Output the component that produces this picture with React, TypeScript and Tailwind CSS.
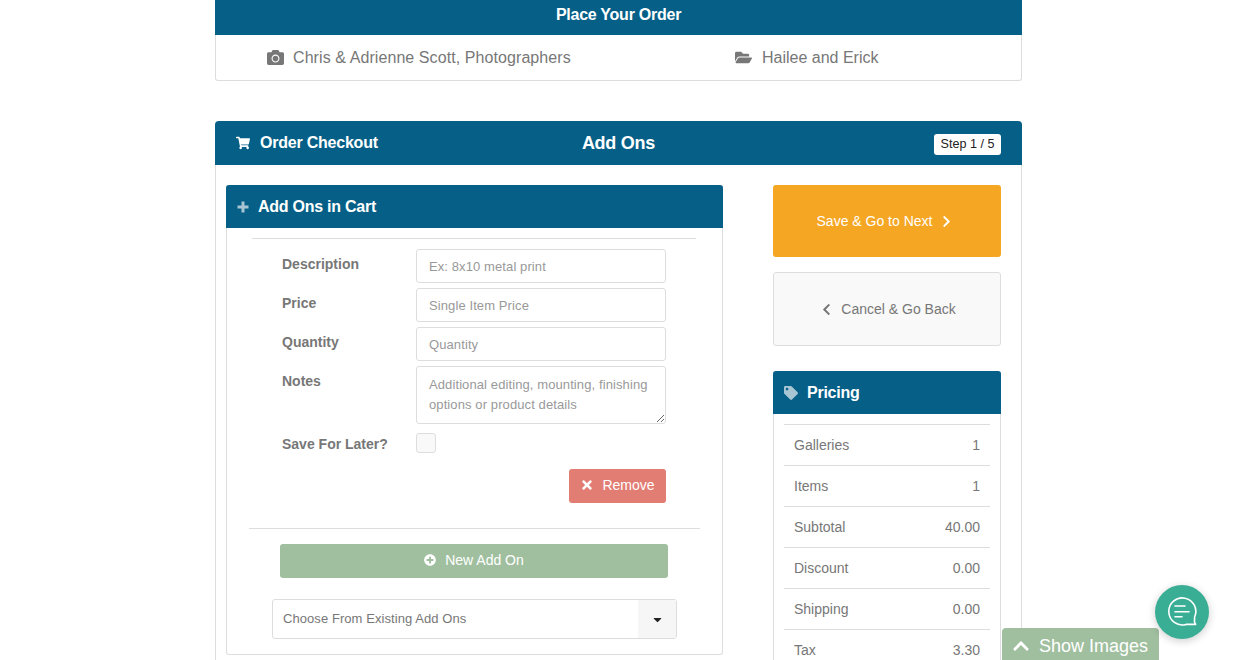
import { FaCamera, FaFolderOpen, FaShoppingCart, FaChevronRight, FaChevronLeft, FaTag, FaTimes, FaPlusCircle, FaChevronUp, FaCaretDown } from "react-icons/fa";

const fieldClass = "block w-[250px] border border-[#ddd] rounded-[3px] bg-white px-[12px] text-[13px] tracking-[0.1px] text-[#777] placeholder:text-[#999] outline-none";

function Label({ children, className = "" }: { children: string; className?: string }) {
  return <div className={"w-[134px] shrink-0 text-[14px] font-bold text-[#777] leading-[20px] " + className}>{children}</div>;
}

function PriceRow({ label, value }: { label: string; value: string }) {
  return (
    <div className="h-[41px] border-t border-[#ddd] flex items-center justify-between pl-[10px] pr-[10px] text-[14px] text-[#777]">
      <span>{label}</span>
      <span>{value}</span>
    </div>
  );
}

export default function App() {
  return (
    <div className="relative h-[660px] overflow-hidden bg-white font-['Liberation_Sans',Arial,sans-serif]">
      <div className="w-[807px] ml-[215px]">
        <div className="h-[35px] pb-[6px] bg-[#055f87] flex items-center justify-center text-white font-bold text-[16px] tracking-[-0.25px]">Place Your Order</div>
        <div className="h-[46px] border border-t-0 border-[#ddd] rounded-b-[3px] flex items-center text-[16px] text-[#777]">
          <div className="w-[468px] pl-[51px] flex items-center tracking-[0.08px]">
            <FaCamera className="text-[17px] mr-[9px]" />
            <span>Chris &amp; Adrienne Scott, Photographers</span>
          </div>
          <div className="flex items-center pl-[51px]">
            <FaFolderOpen className="text-[17px] mr-[10px]" />
            <span>Hailee and Erick</span>
          </div>
        </div>

        <div className="mt-[40px] border border-t-0 border-[#ddd] rounded-t-[4px] h-[600px]">
          <div className="h-[44px] -mx-px bg-[#055f87] rounded-t-[4px] grid grid-cols-[1fr_auto_1fr] items-center pl-[21px] pr-[21px] text-white">
            <div className="flex items-center font-bold text-[16px] tracking-[-0.22px]">
              <FaShoppingCart className="text-[14px] mr-[10px]" />
              <span>Order Checkout</span>
            </div>
            <div className="font-bold text-[18px] tracking-[-0.25px] mt-[1px]">Add Ons</div>
            <div className="justify-self-end mt-[2px] bg-white text-[#222] text-[12.6px] h-[21px] w-[67px] rounded-[3px] flex items-center justify-center">Step 1 / 5</div>
          </div>

          <div className="flex items-start pt-[20px] pl-[10px]">
            <div className="w-[497px] border border-t-0 border-[#ddd] rounded-[3px] h-[470px]">
              <div className="h-[43px] -mx-px bg-[#055f87] rounded-t-[3px] flex items-center pl-[11px] text-white font-bold text-[16px] tracking-[-0.25px]">
                <svg width="12" height="12" viewBox="0 0 12 12" className="mr-[9px] text-[#a8c5d4]" fill="currentColor">
                  <path d="M4.5 0.5h3v4h4v3h-4v4h-3v-4h-4v-3h4z" />
                </svg>
                <span>Add Ons in Cart</span>
              </div>
              <div className="ml-[25px] mr-[26px] mt-[10px] border-t border-[#ddd]"></div>
              <div className="ml-[55px] mt-[10px] flex flex-col gap-[5px]">
                <div className="flex items-start">
                  <Label className="pt-[5px]">Description</Label>
                  <input className={fieldClass + " h-[34px]"} placeholder="Ex: 8x10 metal print" />
                </div>
                <div className="flex items-start">
                  <Label className="pt-[5px]">Price</Label>
                  <input className={fieldClass + " h-[34px]"} placeholder="Single Item Price" />
                </div>
                <div className="flex items-start">
                  <Label className="pt-[5px]">Quantity</Label>
                  <input className={fieldClass + " h-[34px]"} placeholder="Quantity" />
                </div>
                <div className="flex items-start">
                  <Label className="pt-[5px]">Notes</Label>
                  <textarea className={fieldClass + " h-[58px] pt-[8px] leading-[20px] resize-y"} placeholder="Additional editing, mounting, finishing options or product details" />
                </div>
              </div>
              <div className="ml-[55px] mt-[9px] h-[20px] flex items-start">
                <Label className="pt-[1px]">Save For Later?</Label>
                <div className="w-[20px] h-[20px] border border-[#ddd] rounded-[3px] bg-[#f9f9f9]"></div>
              </div>
              <div className="mt-[16px] ml-[342px] w-[97px] h-[34px] pb-[2px] rounded-[3px] bg-[#e27d73] text-white text-[14px] flex items-center justify-center">
                <FaTimes className="text-[14px] mr-[8px]" />
                <span>Remove</span>
              </div>
              <div className="ml-[22px] mr-[22px] mt-[25px] border-t border-[#ddd]"></div>
              <div className="mt-[15px] ml-[53px] w-[388px] h-[34px] pb-[2px] rounded-[3px] bg-[#a0bf9f] text-white text-[14px] flex items-center justify-center">
                <FaPlusCircle className="text-[12px] mr-[9px]" />
                <span>New Add On</span>
              </div>
              <div className="mt-[21px] ml-[45px] w-[405px] h-[40px] border border-[#ddd] rounded-[3px] flex items-stretch text-[13px] tracking-[0.07px] text-[#777]">
                <div className="flex-1 flex items-center pl-[10px]">Choose From Existing Add Ons</div>
                <div className="w-[38px] bg-[#f6f6f6] flex items-center justify-center text-[#222]">
                  <FaCaretDown className="text-[13px]" />
                </div>
              </div>
            </div>

            <div className="w-[228px] ml-[50px]">
              <div className="h-[72px] pr-[4px] rounded-[3px] bg-[#f5a623] text-white text-[14px] flex items-center justify-center">
                <span>Save &amp; Go to Next</span>
                <FaChevronRight className="text-[13px] ml-[8px]" />
              </div>
              <div className="h-[74px] pl-[2px] mt-[15px] rounded-[3px] border border-[#ddd] bg-[#f9f9f9] text-[#777] text-[14px] flex items-center justify-center">
                <FaChevronLeft className="text-[13px] mr-[8px]" />
                <span>Cancel &amp; Go Back</span>
              </div>
              <div className="mt-[25px] border border-t-0 border-[#ddd] rounded-[3px]">
                <div className="h-[43px] -mx-px bg-[#055f87] rounded-t-[3px] flex items-center pl-[11px] text-white font-bold text-[16px] tracking-[-0.25px]">
                  <FaTag className="text-[14px] mr-[9px] text-[#a8c5d4]" />
                  <span>Pricing</span>
                </div>
                <div className="mx-[10px] mt-[10px]">
                  <PriceRow label="Galleries" value="1" />
                  <PriceRow label="Items" value="1" />
                  <PriceRow label="Subtotal" value="40.00" />
                  <PriceRow label="Discount" value="0.00" />
                  <PriceRow label="Shipping" value="0.00" />
                  <PriceRow label="Tax" value="3.30" />
                </div>
              </div>
            </div>
          </div>
        </div>
      </div>

      <div className="absolute left-[1002px] top-[628px] w-[157px] h-[32px] pt-[4px] bg-[#a0bf9f] rounded-t-[4px] flex items-center pl-[10px] text-white text-[18px]">
        <FaChevronUp className="text-[18px] mr-[9px]" />
        <span>Show Images</span>
      </div>

      <div className="absolute left-[1155px] top-[585px] w-[54px] h-[54px] rounded-full bg-[#3aae94] shadow-[0_2px_8px_rgba(0,0,0,0.2)] flex items-center justify-center">
        <svg width="30" height="30" viewBox="0 0 30 30" fill="none" stroke="white" strokeWidth="1.6" strokeLinecap="round" strokeLinejoin="round">
          <path d="M19 27.4A13.5 13.5 0 1 1 27.6 20L27.5 25L28.6 27.4Z" />
          <path d="M8 9h10M8 14.7h14M8 19.7h7" />
        </svg>
      </div>
    </div>
  );
}
